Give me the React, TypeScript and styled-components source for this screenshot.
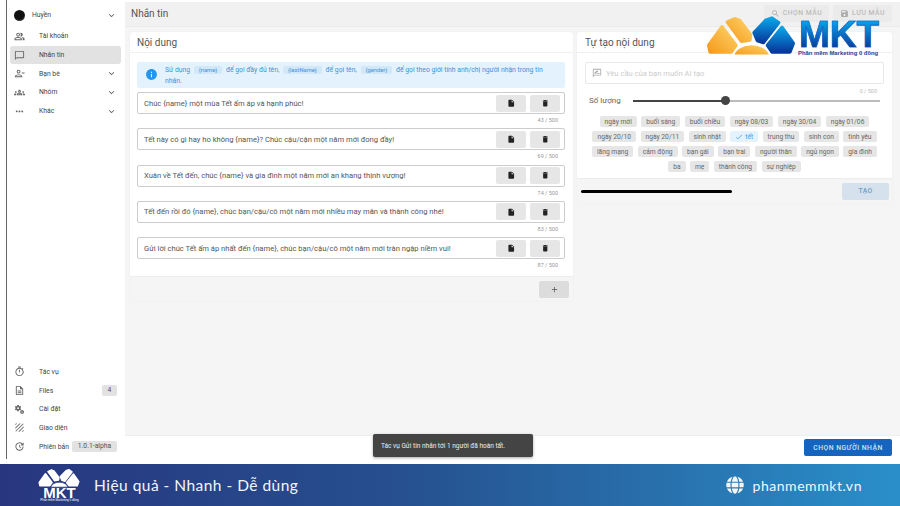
import styled, { createGlobalStyle } from 'styled-components';
import { ReactNode } from 'react';
import {
  MdAdd, MdCheck, MdDelete, MdExpandMore, MdInfo, MdInsertDriveFile, MdMiscellaneousServices,
  MdMoreHoriz, MdOutlineChatBubbleOutline, MdOutlineDescription, MdOutlineGroups, MdOutlinePeopleAlt,
  MdOutlinePersonRemove, MdOutlineRateReview, MdOutlineTimer, MdOutlineUpdate, MdSave, MdSearch, MdTexture,
} from 'react-icons/md';
import { FaGlobe } from 'react-icons/fa';

const GlobalStyle = createGlobalStyle`
  html, body { margin: 0; padding: 0; background: #fff; }
  * { box-sizing: border-box; }
  body { font-family: Roboto, "Liberation Sans", sans-serif; color: #444; }
`;

const Page = styled.div`
  position: relative;
  width: 900px;
  height: 506px;
  overflow: hidden;
  display: flex;
  flex-direction: column;
  background: #fff;
`;
const Shell = styled.div`
  height: 464px;
  padding: 0 0 5px 6px;
  display: flex;
`;
const Sidebar = styled.aside`
  width: 119px;
  border-left: 1px solid #666;
  display: flex;
  flex-direction: column;
  justify-content: space-between;
  padding: 6px 4px 3px 3px;
  background: #fff;
`;
const NavGroup = styled.nav`
  display: flex;
  flex-direction: column;
`;
const NavItem = styled.div<{ $active?: boolean }>`
  height: 18.7px;
  display: flex;
  align-items: center;
  padding: 0 4px 0 4px;
  border-radius: 3px;
  font-size: 6.8px;
  color: #444;
  background: ${(p) => (p.$active ? '#e2e2e2' : 'transparent')};
  svg { flex: none; }
`;
const ProfileItem = styled(NavItem)`
  height: 21px;
  padding-bottom: 3px;
`;
const NavIcon = styled.span`
  width: 25px;
  display: flex;
  align-items: center;
  color: #666;
  font-size: 11px;
`;
const Avatar = styled.span`
  width: 11px;
  height: 11px;
  margin-right: 7px;
  border-radius: 50%;
  background: radial-gradient(circle at 45% 35%, #111 55%, #666);
`;
const NavLabel = styled.span`
  flex: 1;
`;
const Chevron = styled(MdExpandMore)`
  font-size: 11px;
  color: #666;
`;
const NavBadge = styled.span<{ $wide?: boolean }>`
  height: 11px;
  min-width: ${(p) => (p.$wide ? '45px' : '15px')};
  padding: 0 2px;
  border-radius: 2px;
  background: #e2e2e2;
  font-size: 6.8px;
  line-height: 11px;
  text-align: center;
  color: #555;
`;
const Main = styled.main`
  flex: 1;
  display: flex;
  flex-direction: column;
  padding-top: 2px;
  min-width: 0;
  background: #fff;
`;
const TopBar = styled.header`
  height: 25px;
  flex: none;
  display: flex;
  align-items: center;
  justify-content: space-between;
  padding: 0 8px 2px 6px;
  background: #f1f1f1;
  border-bottom: 1px solid #ebebeb;
`;
const PageTitle = styled.h1`
  margin: 0;
  font-size: 10px;
  font-weight: 400;
  color: #555;
`;
const TopActions = styled.div`
  display: flex;
  gap: 4px;
`;
const FadedButton = styled.button<{ $width: number }>`
  width: ${(p) => p.$width}px;
  height: 17px;
  padding: 0;
  border: none;
  border-radius: 2px;
  background: #ebebeb;
  color: #bbb;
  font: 500 6.8px Roboto, sans-serif;
  letter-spacing: 0.5px;
  display: flex;
  align-items: center;
  justify-content: center;
  gap: 3px;
  svg { font-size: 9px; color: #aaa; }
`;
const Content = styled.div`
  flex: 1;
  display: grid;
  grid-template-columns: 443px 315px;
  gap: 4px;
  align-items: start;
  padding: 5px 8px 0 5px;
  background: #f5f5f5;
`;
const Panel = styled.section`
  background: #fff;
  border-radius: 2px;
  box-shadow: 0 0 1px rgba(0, 0, 0, 0.12);
`;
const PanelTitle = styled.h2<{ $inset: number }>`
  height: 21px;
  margin: 0;
  padding: 0 ${(p) => p.$inset}px;
  font-size: 10px;
  line-height: 21px;
  font-weight: 400;
  color: #555;
  border-bottom: 1px solid #f0f0f0;
`;
const LeftBody = styled.div`
  padding: 9px 8px 3px 7px;
`;
const Alert = styled.div`
  height: 26px;
  margin-bottom: 4px;
  padding: 3px 16px 0 8px;
  display: flex;
  gap: 7px;
  border-radius: 2px;
  background: #e3f2fd;
  color: #3d93d8;
  font-size: 6.8px;
  line-height: 10.5px;
  svg { flex: none; font-size: 13px; color: #2196f3; margin-top: 3px; }
`;
const Token = styled.code`
  margin: 0 2px;
  padding: 1px 5px;
  border-radius: 2px;
  background: #d2e8f8;
  font: 5.8px Roboto, sans-serif;
`;
const MessageItem = styled.div`
  height: 36.3px;
`;
const MessageBox = styled.div`
  height: 22px;
  padding: 0 4px 0 6px;
  display: flex;
  align-items: center;
  justify-content: space-between;
  border: 1px solid #ccc;
  border-radius: 2px;
  font-size: 7.6px;
  color: #555;
`;
const IconActions = styled.div`
  display: flex;
  gap: 4px;
`;
const IconButton = styled.button`
  width: 30px;
  height: 17px;
  padding: 0;
  border: none;
  border-radius: 2px;
  background: #e6e6e6;
  color: #222;
  display: flex;
  align-items: center;
  justify-content: center;
  font-size: 8.5px;
`;
const Count = styled.div`
  margin-top: 3px;
  padding-right: 7px;
  text-align: right;
  font-size: 5.5px;
  color: #999;
`;
const PanelFooter = styled.footer<{ $align: string }>`
  height: 25px;
  display: flex;
  align-items: center;
  justify-content: ${(p) => p.$align};
  padding: 0 3px 0 4px;
  background: #f5f5f5;
  border-top: 1px solid #ececec;
`;
const AddButton = styled.button`
  width: 30px;
  height: 17px;
  margin-right: 1px;
  padding: 0;
  border: none;
  border-radius: 2px;
  background: #dcdcdc;
  color: #555;
  display: flex;
  align-items: center;
  justify-content: center;
  font-size: 9px;
`;
const RightBody = styled.div`
  height: 125px;
  padding: 9px 8px 0;
`;
const PromptBox = styled.div`
  height: 22px;
  padding: 0 6px;
  display: flex;
  align-items: center;
  gap: 4px;
  border: 1px solid #e8e8e8;
  border-radius: 2px;
  font-size: 7.6px;
  color: #ccc;
  svg { font-size: 10px; color: #aaa; }
`;
const PromptCount = styled(Count)`
  margin-top: 4px;
  height: 6px;
  color: #bbb;
`;
const SliderRow = styled.div`
  height: 13px;
  display: flex;
  align-items: center;
  padding: 0 4px;
  font-size: 8px;
  color: #666;
`;
const SliderLabel = styled.span`
  width: 44px;
  flex: none;
`;
const Track = styled.div`
  position: relative;
  flex: 1;
  height: 2px;
  background: #bbb;
`;
const TrackFill = styled.div`
  height: 2px;
  background: #444;
`;
const Thumb = styled.span`
  position: absolute;
  top: -4px;
  width: 9px;
  height: 9px;
  margin-left: -4.5px;
  border-radius: 50%;
  background: #444;
`;
const Chips = styled.div`
  margin-top: 9px;
  display: flex;
  flex-direction: column;
  gap: 4px;
`;
const ChipRow = styled.div`
  display: flex;
  justify-content: center;
  gap: 4.4px;
`;
const Chip = styled.span<{ $on?: boolean }>`
  height: 11px;
  padding: 0 5px;
  display: inline-flex;
  align-items: center;
  gap: 2px;
  border-radius: 2px;
  font-size: 6.7px;
  white-space: nowrap;
  color: ${(p) => (p.$on ? '#4a9ee0' : '#666')};
  background: ${(p) => (p.$on ? '#e3f2fd' : '#e6e6e6')};
  svg { font-size: 8px; }
`;
const ProgressBar = styled.div`
  width: 151px;
  height: 3px;
  border-radius: 2px;
  background: #000;
`;
const CreateButton = styled.button`
  width: 47px;
  height: 17px;
  padding: 0;
  border: none;
  border-radius: 2px;
  background: #d5e2ee;
  color: #6f9cc4;
  font: 500 6.8px Roboto, sans-serif;
  letter-spacing: 0.4px;
`;
const BottomBar = styled.footer`
  height: 24px;
  flex: none;
  display: flex;
  align-items: center;
  justify-content: flex-end;
  padding: 0 8px 0 0;
  background: #fff;
  border-top: 1px solid #eee;
`;
const PrimaryButton = styled.button`
  width: 88px;
  height: 17px;
  padding: 0;
  border: none;
  border-radius: 2px;
  background: #1565c0;
  color: #cfe2f5;
  font: 500 6.8px Roboto, sans-serif;
  letter-spacing: 0.5px;
`;
const Toast = styled.div`
  position: absolute;
  left: 373px;
  top: 434px;
  width: 160px;
  height: 23px;
  padding: 0 8px;
  display: flex;
  align-items: center;
  border-radius: 2px;
  background: #444;
  color: #eee;
  font-size: 6.5px;
  box-shadow: 0 1px 3px rgba(0, 0, 0, 0.35);
`;
const LogoOverlay = styled.div`
  position: absolute;
  left: 700px;
  top: 10px;
  width: 182px;
  height: 52px;
`;
const LogoWord = styled.div`
  position: absolute;
  left: 99px;
  top: 6px;
  font: 700 37px/37px "Liberation Sans", sans-serif;
  -webkit-text-stroke: 0.6px #0a5fc0;
  background: linear-gradient(#0aa0e6 15%, #0a3d9c 85%);
  -webkit-background-clip: text;
  background-clip: text;
  color: transparent;
`;
const LogoTag = styled.div`
  position: absolute;
  left: 98px;
  top: 40px;
  font: 700 5.9px "Liberation Sans", sans-serif;
  white-space: nowrap;
  color: #1f3f9c;
`;
const Banner = styled.div`
  height: 42px;
  flex: none;
  display: flex;
  align-items: center;
  justify-content: space-between;
  padding: 0 38px 0 38px;
  background: linear-gradient(90deg, #28367f 0%, #26508f 45%, #2a8fc9 100%);
  color: #f2f6fb;
`;
const BannerLeft = styled.div`
  display: flex;
  align-items: center;
  gap: 13px;
`;
const BannerMark = styled.div`
  width: 43px;
  display: flex;
  flex-direction: column;
  align-items: center;
  color: #fff;
  svg { display: block; }
`;
const BannerWord = styled.span`
  margin-top: -1px;
  font: 700 15px/11px "Liberation Sans", sans-serif;
`;
const BannerTag = styled.span`
  font: 400 3px/4px "Liberation Sans", sans-serif;
  white-space: nowrap;
`;
const Slogan = styled.span`
  font: 400 15.5px Lato, sans-serif;
  letter-spacing: 0.48px;
`;
const SiteLink = styled.div`
  display: flex;
  align-items: center;
  gap: 8px;
  font: 400 14px Lato, sans-serif;
  letter-spacing: 0.55px;
  svg { font-size: 18px; }
`;

function MarkShapes({ orange, blue, sunEdge }: { orange: string; blue: string; sunEdge: string }) {
  return (
    <>
      <g strokeLinejoin="round" strokeWidth="10">
        <path d="M82 36 L104 26 L120 32 L152 74 L150 90 L124 94 Z" fill={orange} stroke={orange} />
        <path d="M66 50 L108 106 L94 126 L30 126 L26 106 Z" fill={orange} stroke={orange} />
        <path d="M162 68 L198 30 L216 24 L236 38 L190 98 L172 92 Z" fill={blue} stroke={blue} />
        <path d="M246 52 L280 100 L270 126 L216 126 L202 106 Z" fill={blue} stroke={blue} />
      </g>
      <path d="M100 136 A56 40 0 0 1 210 136 Z" fill={orange} stroke={sunEdge} strokeWidth="5" />
    </>
  );
}

function MktMark() {
  return (
    <svg width="110" height="52" viewBox="0 0 330 156" aria-hidden>
      <defs>
        <linearGradient id="mktOrange" x1="0" y1="1" x2="1" y2="0">
          <stop offset="0" stopColor="#f59a1d" />
          <stop offset="1" stopColor="#fdd469" />
        </linearGradient>
        <linearGradient id="mktBlue" x1="0" y1="0" x2="0" y2="1">
          <stop offset="0" stopColor="#0aa5e8" />
          <stop offset="1" stopColor="#07379a" />
        </linearGradient>
      </defs>
      <MarkShapes orange="url(#mktOrange)" blue="url(#mktBlue)" sunEdge="#fff" />
    </svg>
  );
}

function BannerLogo() {
  return (
    <BannerMark>
      <svg width="43" height="20" viewBox="18 14 276 126" aria-hidden>
        <MarkShapes orange="#fff" blue="#fff" sunEdge="#28367f" />
      </svg>
      <BannerWord>MKT</BannerWord>
      <BannerTag>Phần mềm Marketing 0 đồng</BannerTag>
    </BannerMark>
  );
}

const messages = [
  ['Chúc {name} một mùa Tết ấm áp và hạnh phúc!', '43 / 500'],
  ['Tết này có gì hay ho không {name}? Chúc cậu/cận một năm mới đong đầy!', '69 / 500'],
  ['Xuân về Tết đến, chúc {name} và gia đình một năm mới an khang thịnh vượng!', '74 / 500'],
  ['Tết đến rồi đó {name}, chúc bạn/cậu/cô một năm mới nhiều may mắn và thành công nhé!', '83 / 500'],
  ['Gửi lời chúc Tết ấm áp nhất đến {name}, chúc bạn/cậu/cô một năm mới tràn ngập niềm vui!', '87 / 500'],
];

const chipRows = [
  ['ngày mới', 'buổi sáng', 'buổi chiều', 'ngày 08/03', 'ngày 30/04', 'ngày 01/06'],
  ['ngày 20/10', 'ngày 20/11', 'sinh nhật', 'tết', 'trung thu', 'sinh con', 'tình yêu'],
  ['lãng mạng', 'cảm động', 'bạn gái', 'bạn trai', 'người thân', 'ngủ ngon', 'gia đình'],
  ['ba', 'mẹ', 'thành công', 'sự nghiệp'],
];

const topNav: { label: string; icon: ReactNode; more?: boolean; active?: boolean }[] = [
  { label: 'Tài khoản', icon: <MdOutlinePeopleAlt /> },
  { label: 'Nhắn tin', icon: <MdOutlineChatBubbleOutline />, active: true },
  { label: 'Bạn bè', icon: <MdOutlinePersonRemove />, more: true },
  { label: 'Nhóm', icon: <MdOutlineGroups />, more: true },
  { label: 'Khác', icon: <MdMoreHoriz />, more: true },
];

export default function App() {
  return (
    <Page>
      <GlobalStyle />
      <Shell>
        <Sidebar>
          <NavGroup>
            <ProfileItem>
              <Avatar />
              <NavLabel>Huyền</NavLabel>
              <Chevron />
            </ProfileItem>
            {topNav.map((item) => (
              <NavItem key={item.label} $active={item.active}>
                <NavIcon>{item.icon}</NavIcon>
                <NavLabel>{item.label}</NavLabel>
                {item.more && <Chevron />}
              </NavItem>
            ))}
          </NavGroup>
          <NavGroup>
            <NavItem><NavIcon><MdOutlineTimer /></NavIcon><NavLabel>Tác vụ</NavLabel></NavItem>
            <NavItem><NavIcon><MdOutlineDescription /></NavIcon><NavLabel>Files</NavLabel><NavBadge>4</NavBadge></NavItem>
            <NavItem><NavIcon><MdMiscellaneousServices /></NavIcon><NavLabel>Cài đặt</NavLabel></NavItem>
            <NavItem><NavIcon><MdTexture /></NavIcon><NavLabel>Giao diện</NavLabel></NavItem>
            <NavItem><NavIcon><MdOutlineUpdate /></NavIcon><NavLabel>Phiên bản</NavLabel><NavBadge $wide>1.0.1-alpha</NavBadge></NavItem>
          </NavGroup>
        </Sidebar>
        <Main>
          <TopBar>
            <PageTitle>Nhắn tin</PageTitle>
            <TopActions>
              <FadedButton $width={65}><MdSearch />CHỌN MẪU</FadedButton>
              <FadedButton $width={59}><MdSave />LƯU MẪU</FadedButton>
            </TopActions>
          </TopBar>
          <Content>
            <Panel>
              <PanelTitle $inset={7}>Nội dung</PanelTitle>
              <LeftBody>
                <Alert>
                  <MdInfo />
                  <span>
                    Sử dụng <Token>{'{name}'}</Token> để gọi đầy đủ tên, <Token>{'{lastName}'}</Token> để gọi tên,{' '}
                    <Token>{'{gender}'}</Token> để gọi theo giới tính anh/chị người nhận trong tin
                    <br />
                    nhắn.
                  </span>
                </Alert>
                {messages.map(([text, count]) => (
                  <MessageItem key={count}>
                    <MessageBox>
                      <span>{text}</span>
                      <IconActions>
                        <IconButton><MdInsertDriveFile /></IconButton>
                        <IconButton><MdDelete /></IconButton>
                      </IconActions>
                    </MessageBox>
                    <Count>{count}</Count>
                  </MessageItem>
                ))}
              </LeftBody>
              <PanelFooter $align="flex-end">
                <AddButton><MdAdd /></AddButton>
              </PanelFooter>
            </Panel>
            <Panel>
              <PanelTitle $inset={8}>Tự tạo nội dung</PanelTitle>
              <RightBody>
                <PromptBox><MdOutlineRateReview />Yêu cầu của bạn muốn AI tạo</PromptBox>
                <PromptCount>0 / 500</PromptCount>
                <SliderRow>
                  <SliderLabel>Số lượng</SliderLabel>
                  <Track>
                    <TrackFill style={{ width: '37.5%' }} />
                    <Thumb style={{ left: '37.5%' }} />
                  </Track>
                </SliderRow>
                <Chips>
                  {chipRows.map((row) => (
                    <ChipRow key={row[0]}>
                      {row.map((c) => (
                        <Chip key={c} $on={c === 'tết'}>
                          {c === 'tết' && <MdCheck />}
                          {c}
                        </Chip>
                      ))}
                    </ChipRow>
                  ))}
                </Chips>
              </RightBody>
              <PanelFooter $align="space-between">
                <ProgressBar />
                <CreateButton>TẠO</CreateButton>
              </PanelFooter>
            </Panel>
          </Content>
          <BottomBar>
            <PrimaryButton>CHỌN NGƯỜI NHẬN</PrimaryButton>
          </BottomBar>
        </Main>
      </Shell>
      <Banner>
        <BannerLeft>
          <BannerLogo />
          <Slogan>Hiệu quả - Nhanh - Dễ dùng</Slogan>
        </BannerLeft>
        <SiteLink><FaGlobe />phanmemmkt.vn</SiteLink>
      </Banner>
      <Toast>Tác vụ Gửi tin nhắn tới 1 người đã hoàn tất.</Toast>
      <LogoOverlay>
        <MktMark />
        <LogoWord>MKT</LogoWord>
        <LogoTag>Phần mềm Marketing 0 đồng</LogoTag>
      </LogoOverlay>
    </Page>
  );
}
